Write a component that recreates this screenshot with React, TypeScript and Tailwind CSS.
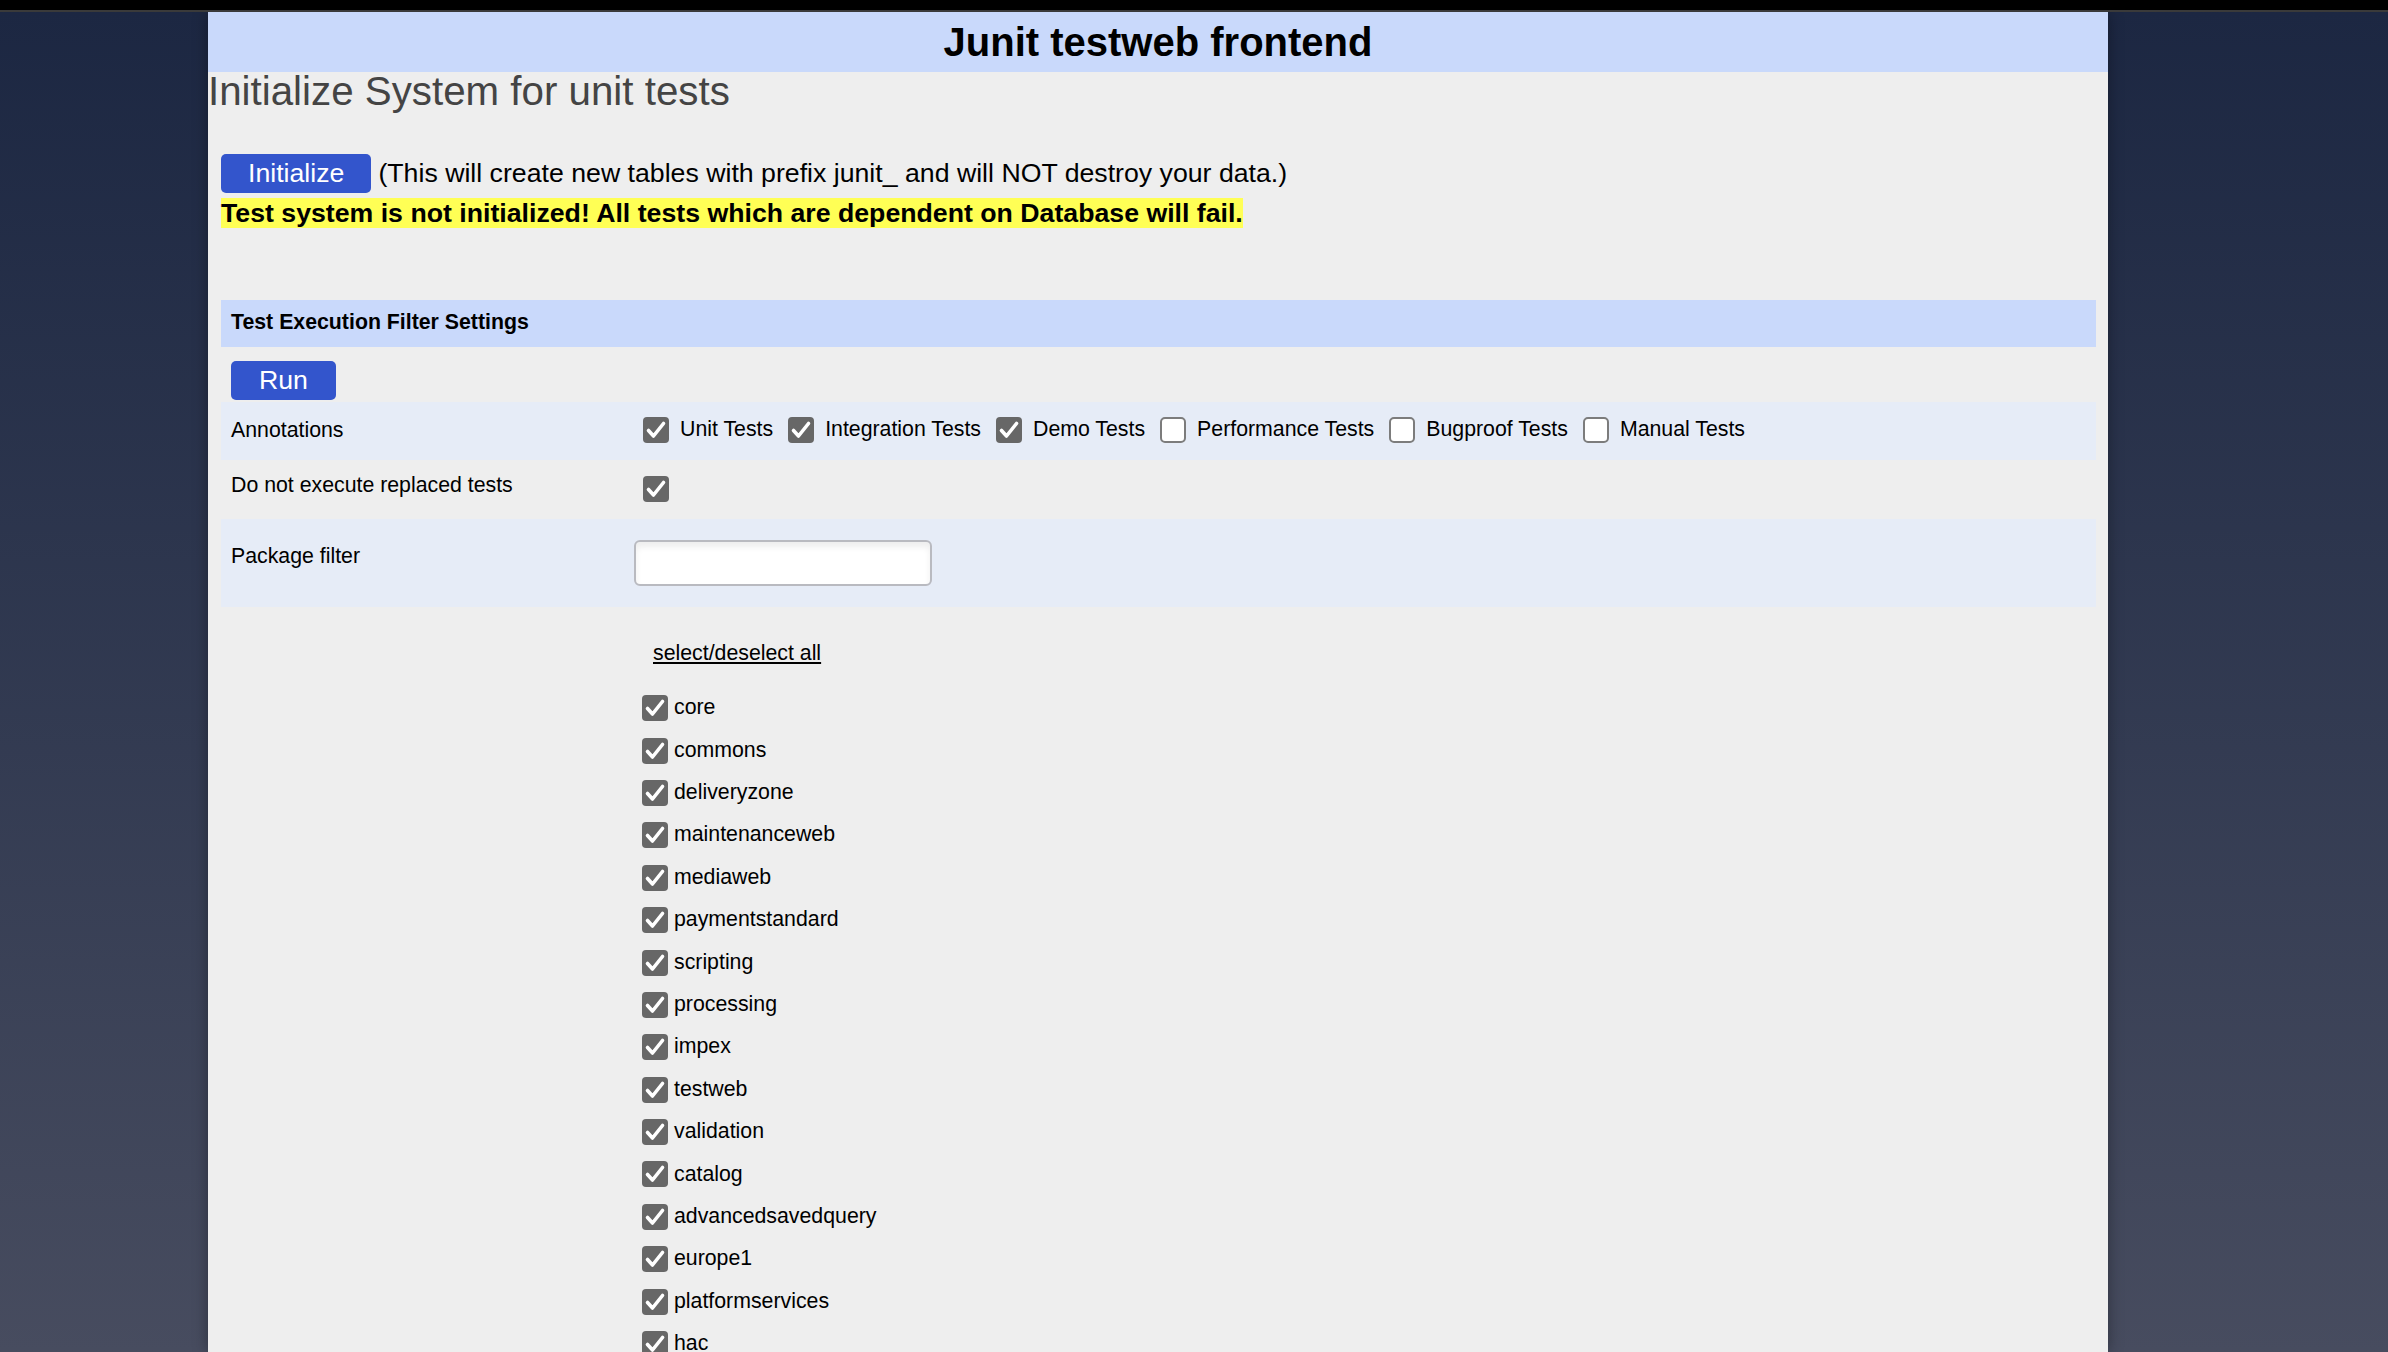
import React from 'react';

const ANNOTATIONS = [
  { label: 'Unit Tests', checked: true },
  { label: 'Integration Tests', checked: true },
  { label: 'Demo Tests', checked: true },
  { label: 'Performance Tests', checked: false },
  { label: 'Bugproof Tests', checked: false },
  { label: 'Manual Tests', checked: false },
];

const EXTENSIONS = [
  'core',
  'commons',
  'deliveryzone',
  'maintenanceweb',
  'mediaweb',
  'paymentstandard',
  'scripting',
  'processing',
  'impex',
  'testweb',
  'validation',
  'catalog',
  'advancedsavedquery',
  'europe1',
  'platformservices',
  'hac',
  'backoffice',
  'solrfacetsearch',
];

function Checkbox({ checked }: { checked: boolean }) {
  if (!checked) {
    return <span className="block h-[26px] w-[26px] shrink-0 rounded-[5px] border-2 border-[#7c7c7c] bg-white" />;
  }
  return (
    <span className="flex h-[26px] w-[26px] shrink-0 items-center justify-center rounded-[4px] bg-[#676767]">
      <svg width="26" height="26" viewBox="0 0 26 26" fill="none">
        <path d="M5.5 13.5 L10.5 19 L20.5 6.5" stroke="#fff" strokeWidth="3.6" strokeLinecap="round" strokeLinejoin="round" />
      </svg>
    </span>
  );
}

function Row({ label, shade, height, labelPad, children }: { label?: string; shade?: boolean; height?: string; labelPad?: string; children: React.ReactNode }) {
  return (
    <div className={`flex items-center ${height ?? ''} ${shade ? 'bg-[#e6ecf7]' : ''}`}>
      <div className={`w-[413px] shrink-0 pl-[10px] ${labelPad ?? ''}`}>{label}</div>
      <div className="flex items-center">{children}</div>
    </div>
  );
}

export default function App() {
  return (
    <div className="flex h-[1352px] flex-col overflow-hidden font-['Liberation_Sans',Arial,sans-serif] text-black">
      <div className="h-[12px] shrink-0 border-b-2 border-[#3a3a3a] bg-black" />
      <div className="flex-1 overflow-hidden bg-gradient-to-b from-[#1c2742] to-[#474c5f]">
        <div className="ml-[208px] h-full w-[1900px] bg-[#eeeeee] shadow-[0_0_14px_rgba(0,0,0,0.35)]">
          <header className="flex h-[60px] items-center justify-center bg-[#c9d9fb]">
            <h1 className="text-[40px] font-bold leading-none">Junit testweb frontend</h1>
          </header>

          <h2 className="text-[40.3px] leading-[39px] text-[#444]">Initialize System for unit tests</h2>

          <div className="ml-[13px] mt-[42px]">
            <div className="flex items-center gap-[7px]">
              <button className="h-[39px] rounded-[5px] bg-[#3355cc] px-[27px] text-[26.7px] leading-none text-white">
                Initialize
              </button>
              <span className="text-[26.7px]">(This will create new tables with prefix junit_ and will NOT destroy your data.)</span>
            </div>
            <p className="mt-[4.5px] text-[26.7px] font-bold leading-[30px]">
              <span className="bg-[#ffff55]">Test system is not initialized! All tests which are dependent on Database will fail.</span>
            </p>
          </div>

          <section className="ml-[13px] mr-[12px] mt-[72px] text-[21.3px]">
            <div className="flex h-[47px] items-center bg-[#c9d9fb] pl-[10px] font-bold">Test Execution Filter Settings</div>

            <button className="ml-[10px] mt-[14px] h-[39px] rounded-[5px] bg-[#3355cc] px-[28px] text-[26.7px] leading-none text-white">
              Run
            </button>

            <div className="mt-[2px]">
              <Row label="Annotations" shade height="h-[58px]">
                <div className="ml-[9px] flex items-center gap-[15px]">
                  {ANNOTATIONS.map((a) => (
                    <label key={a.label} className="flex items-center gap-[11px] pb-[2px]">
                      <Checkbox checked={a.checked} />
                      {a.label}
                    </label>
                  ))}
                </div>
              </Row>
              <Row label="Do not execute replaced tests" height="h-[59px]" labelPad="pb-[7px]">
                <span className="ml-[9px]">
                  <Checkbox checked />
                </span>
              </Row>
              <Row label="Package filter" shade height="h-[88px]" labelPad="pb-[12px]">
                <input
                  type="text"
                  className="h-[46px] w-[298px] rounded-[6px] border-2 border-[#b9bac0] bg-white shadow-[inset_0_5px_6px_rgba(0,0,0,0.07)] outline-none"
                />
              </Row>

              <div className="flex">
                <div className="w-[413px] shrink-0" />
                <div>
                  <a href="#" className="ml-[19px] mt-[31px] block text-black underline">
                    select/deselect all
                  </a>
                  <ul className="mt-[17.5px]">
                    {EXTENSIONS.map((name) => (
                      <li key={name} className="flex h-[42.4px] items-center gap-[6px] pl-[8px]">
                        <Checkbox checked />
                        <span>{name}</span>
                      </li>
                    ))}
                  </ul>
                </div>
              </div>
            </div>
          </section>
        </div>
      </div>
    </div>
  );
}
